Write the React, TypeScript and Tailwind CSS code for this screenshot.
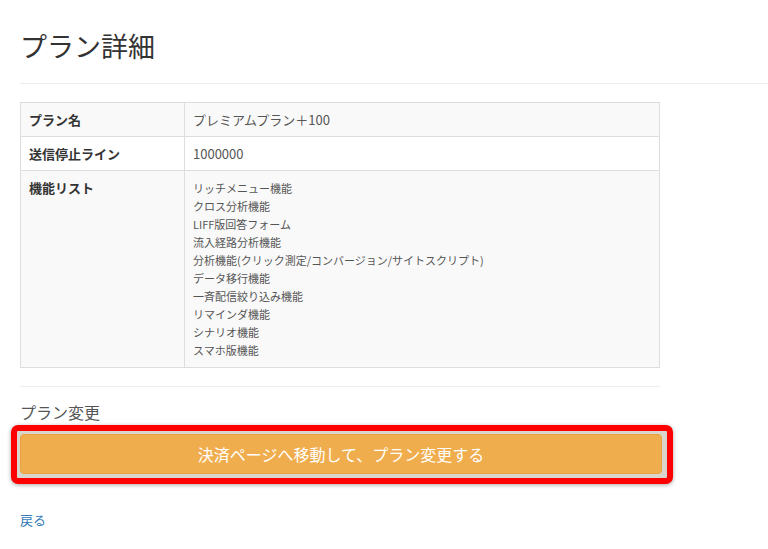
const features = [
  "リッチメニュー機能",
  "クロス分析機能",
  "LIFF版回答フォーム",
  "流入経路分析機能",
  "分析機能(クリック測定/コンバージョン/サイトスクリプト)",
  "データ移行機能",
  "一斉配信絞り込み機能",
  "リマインダ機能",
  "シナリオ機能",
  "スマホ版機能",
];

export default function App() {
  return (
    <div
      className="min-h-screen bg-white text-[#333]"
      style={{ fontFamily: '"Noto Sans CJK JP", "Noto Sans", sans-serif' }}
    >
      <div className="pl-5">
        <div className="pt-[31px] pb-[22px] border-b border-[#eee]">
          <h1 className="text-[27px] leading-[30px] font-normal text-[#333]">プラン詳細</h1>
        </div>

        <div className="w-[640px]">
          <table className="mt-[18px] w-full border-collapse border border-[#ddd] text-[13px] leading-[17px]">
            <tbody>
              <tr className="bg-[#f9f9f9]">
                <th className="w-[164px] border border-[#ddd] p-2 text-left align-top font-bold">プラン名</th>
                <td className="border border-[#ddd] p-2 text-[#555]">プレミアムプラン＋100</td>
              </tr>
              <tr className="bg-white">
                <th className="border border-[#ddd] p-2 text-left align-top font-bold">送信停止ライン</th>
                <td className="border border-[#ddd] p-2 text-[#555]">1000000</td>
              </tr>
              <tr className="bg-[#f9f9f9]">
                <th className="border border-[#ddd] p-2 text-left align-top font-bold leading-[18px]">機能リスト</th>
                <td className="border border-[#ddd] p-2 text-[11px] leading-[18px] text-[#555]">
                  {features.map((f) => (
                    <div key={f}>{f}</div>
                  ))}
                </td>
              </tr>
            </tbody>
          </table>

          <div className="mt-[18px] border-t border-[#eee]" />

          <h3 className="mt-[16px] text-[16px] leading-[18px] font-normal text-[#555]">プラン変更</h3>

          <div className="mt-[4px] -ml-[9px] w-[662px] rounded-[7px] border-[6px] border-[#ff0000] bg-[#d9d4cc] pt-[3px] pb-[4px] pl-[3px] pr-[5px] shadow-[0_1px_4px_rgba(0,0,0,0.35)]">
            <button className="block h-[40px] w-full rounded-[4px] border border-[#e9a240] bg-[#f0ad4e] text-[16px] text-white">
              決済ページへ移動して、プラン変更する
            </button>
          </div>

          <a href="#" className="mt-[27px] block text-[13px] leading-[18px] text-[#337ab7]">
            戻る
          </a>
        </div>
      </div>
    </div>
  );
}
